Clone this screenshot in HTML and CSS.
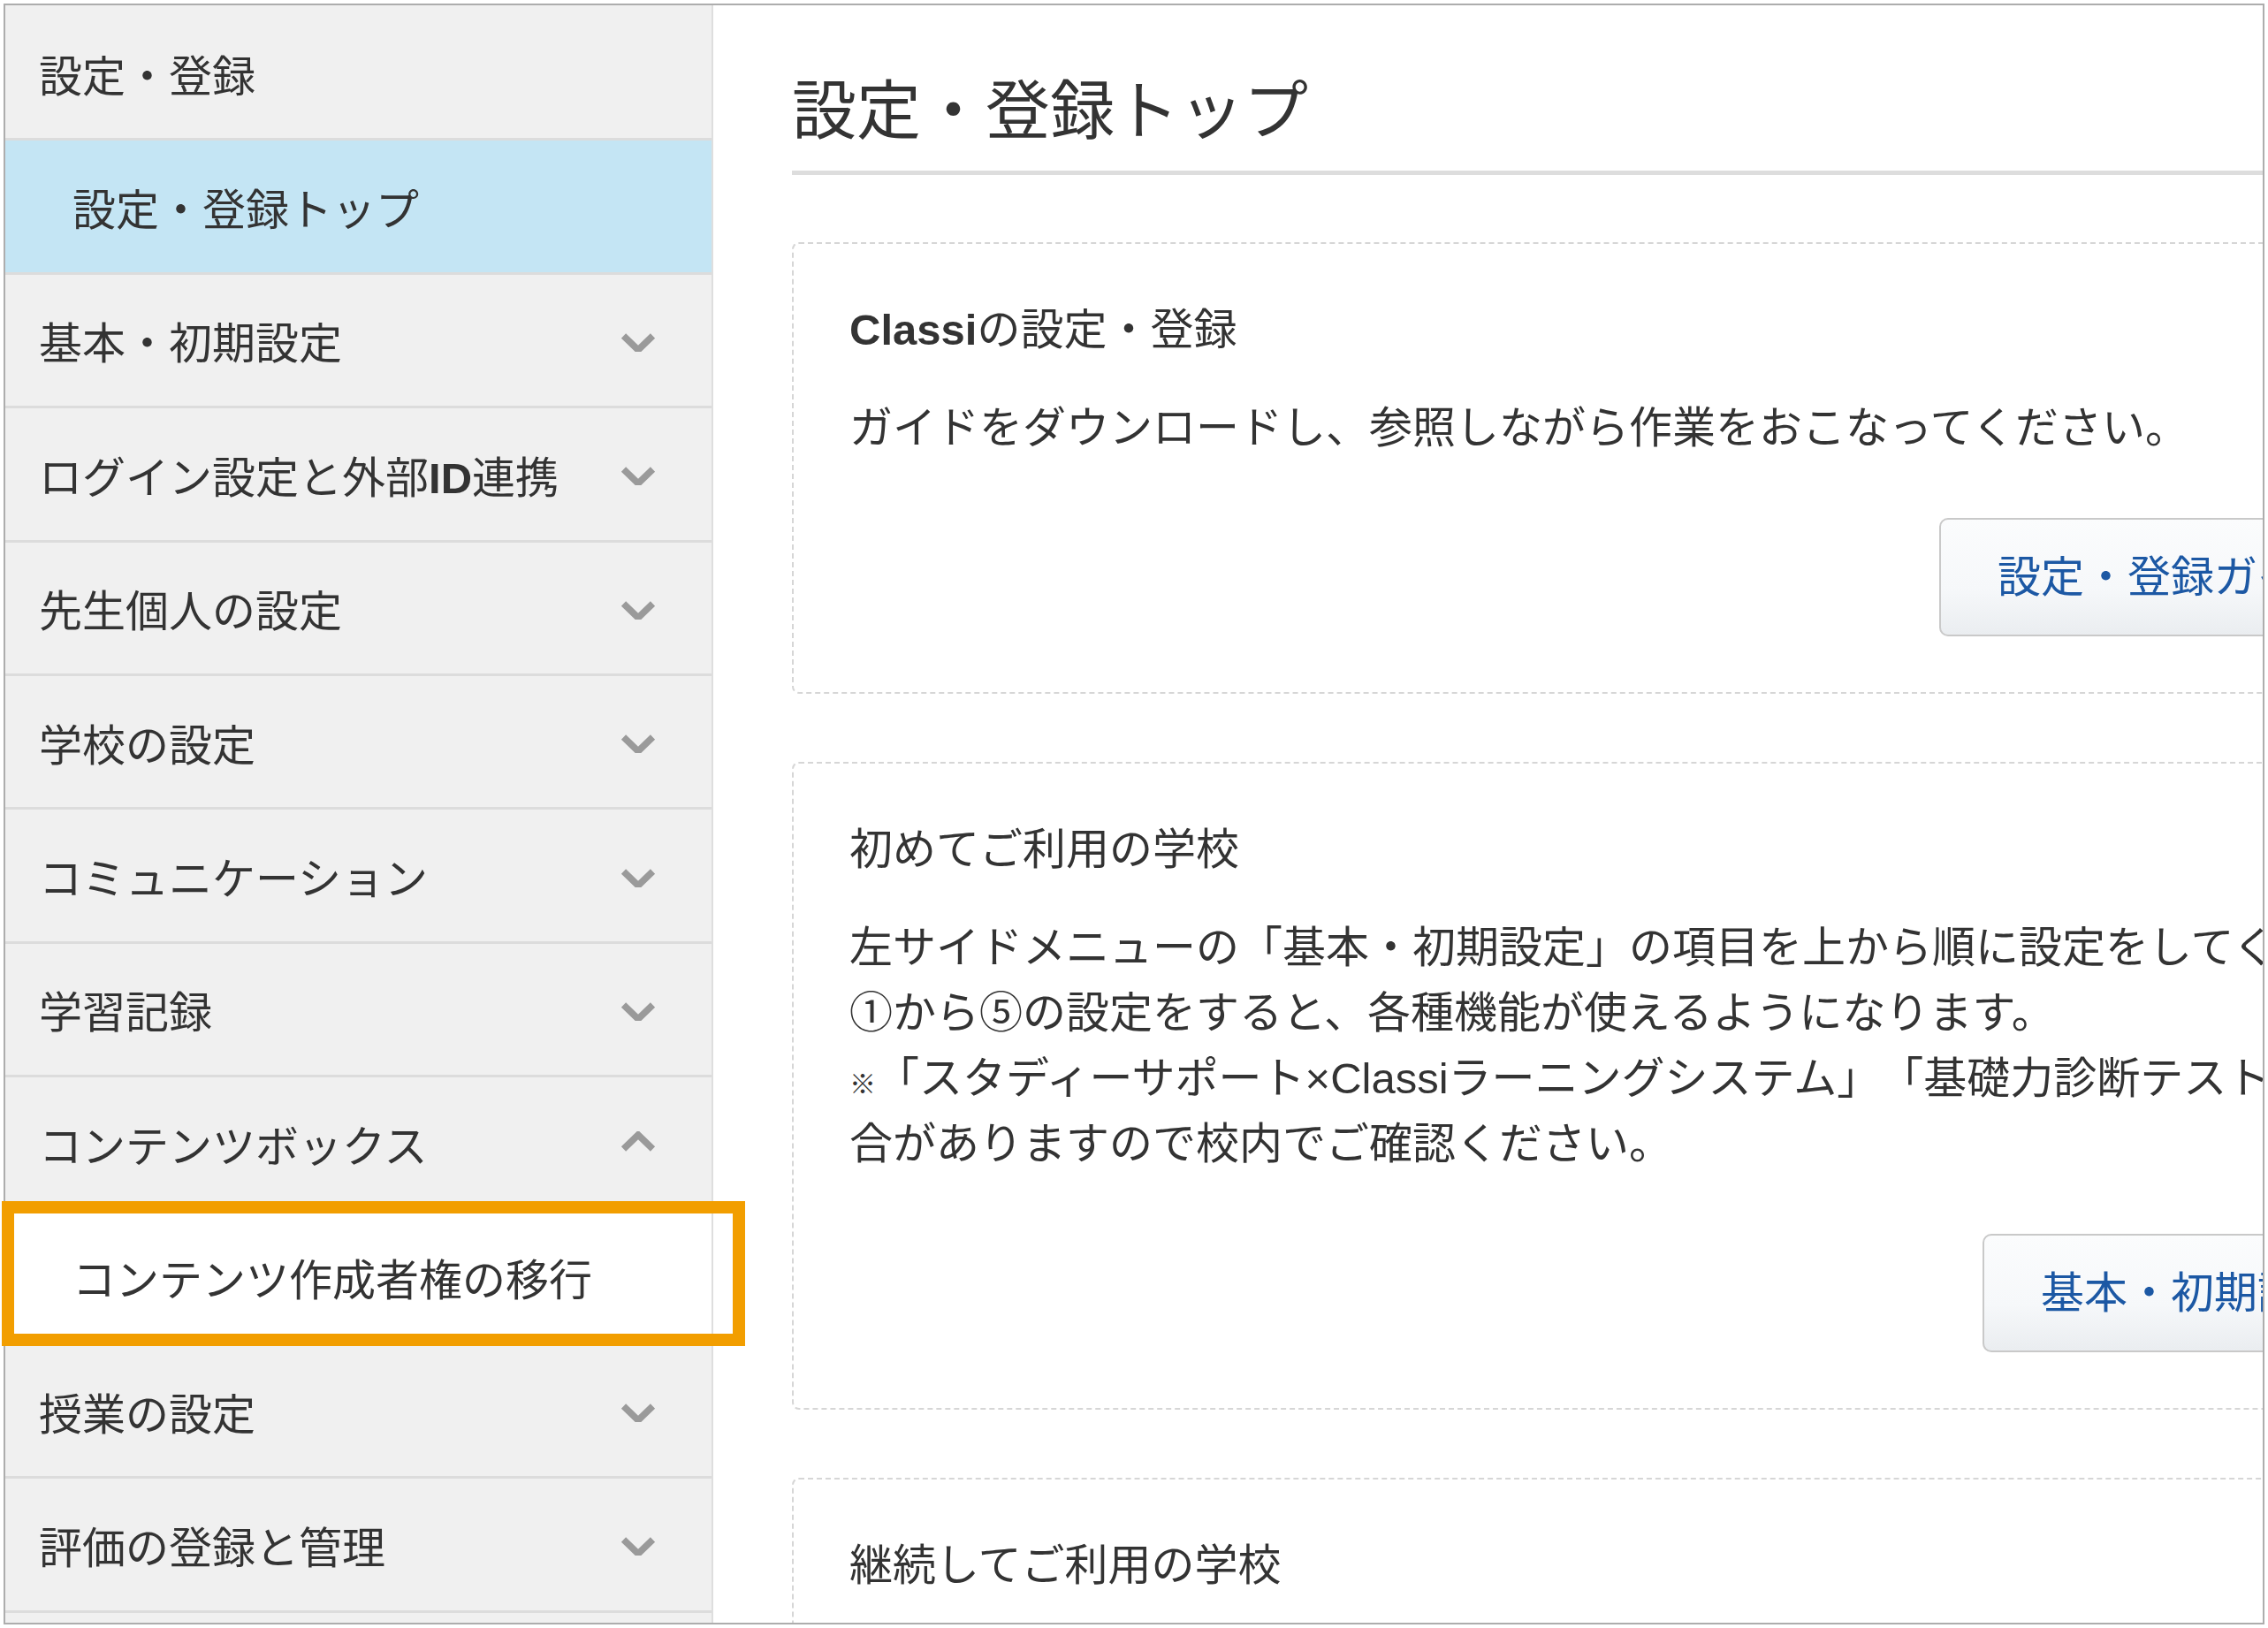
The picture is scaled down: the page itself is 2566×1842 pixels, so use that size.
FILE: index.html
```html
<!DOCTYPE html>
<html lang="ja">
<head>
    <meta charset="UTF-8">
    <meta name="viewport" content="width=device-width, initial-scale=1.0">
    <title>設定・登録トップ</title>
    <link rel="stylesheet" href="styles.css">
</head>
<body>
    <div class="frame">
        <nav class="side">
            <div class="side-head">設定・登録</div>
            <a class="side-sub is-active" href="#">設定・登録トップ</a>
            <div class="side-item">基本・初期設定
                <svg class="chev" viewBox="0 0 40 26"><polyline points="3.5,8 20,24 36.5,8"/></svg>
            </div>
            <div class="side-item">ログイン設定と外部<b class="latin">ID</b>連携
                <svg class="chev" viewBox="0 0 40 26"><polyline points="3.5,8 20,24 36.5,8"/></svg>
            </div>
            <div class="side-item">先生個人の設定
                <svg class="chev" viewBox="0 0 40 26"><polyline points="3.5,8 20,24 36.5,8"/></svg>
            </div>
            <div class="side-item">学校の設定
                <svg class="chev" viewBox="0 0 40 26"><polyline points="3.5,8 20,24 36.5,8"/></svg>
            </div>
            <div class="side-item">コミュニケーション
                <svg class="chev" viewBox="0 0 40 26"><polyline points="3.5,8 20,24 36.5,8"/></svg>
            </div>
            <div class="side-item">学習記録
                <svg class="chev" viewBox="0 0 40 26"><polyline points="3.5,8 20,24 36.5,8"/></svg>
            </div>
            <div class="side-item">コンテンツボックス
                <svg class="chev" viewBox="0 0 40 26"><polyline points="3.5,20 20,4 36.5,20"/></svg>
            </div>
            <a class="side-sub is-current" href="#">コンテンツ作成者権の移行<span class="mark"></span></a>
            <div class="side-item">授業の設定
                <svg class="chev" viewBox="0 0 40 26"><polyline points="3.5,8 20,24 36.5,8"/></svg>
            </div>
            <div class="side-item">評価の登録と管理
                <svg class="chev" viewBox="0 0 40 26"><polyline points="3.5,8 20,24 36.5,8"/></svg>
            </div>
        </nav>

        <main class="main">
            <div class="main-inner">
                <h1 class="page-title">設定・登録トップ</h1>

                <section class="card">
                    <h2 class="card-title"><b class="latin">Classi</b>の設定・登録</h2>
                    <p class="card-text">ガイドをダウンロードし、参照しながら作業をおこなってください。</p>
                    <div class="card-foot">
                        <a class="btn" href="#">設定・登録ガイド</a>
                    </div>
                </section>

                <section class="card">
                    <h2 class="card-title">初めてご利用の学校</h2>
                    <p class="card-text">左サイドメニューの「基本・初期設定」の項目を上から順に設定をしてください。<br>
                    ①から⑤の設定をすると、各種機能が使えるようになります。<br>
                    <span class="note-mark">※</span>「スタディーサポート×Classiラーニングシステム」「基礎力診断テスト」をご利用の場<br>
                    合がありますので校内でご確認ください。</p>
                    <div class="card-foot">
                        <a class="btn" href="#">基本・初期設定</a>
                    </div>
                </section>

                <section class="card">
                    <h2 class="card-title">継続してご利用の学校</h2>
                    <p class="card-text">年度更新の手順に沿って、クラス・生徒情報を更新してください。</p>
                </section>
            </div>
        </main>
    </div>
</body>
</html>
```

FILE: styles.css
```css
body {
    margin: 0;
    padding: 4px;
    background: #fff;
    color: #333;
    font-family: "Liberation Sans", "Noto Sans CJK JP", sans-serif;
    text-spacing-trim: space-all;
}
.frame {
    display: flex;
    height: 1834px;
    box-sizing: border-box;
    border: 2px solid #adadad;
}
.side {
    flex: 0 0 801px;
    box-sizing: border-box;
    padding-top: 2px;
    background: #f0f0f0;
    border-right: 2px solid #dedede;
}
.side-head,
.side-item,
.side-sub {
    display: flex;
    align-items: center;
    justify-content: space-between;
    height: 148.4px;
    border-bottom: 3px solid #dcdcdc;
    padding: 0 63px 0 38px;
    font-size: 49px;
    color: #333;
    text-decoration: none;
}
.side-sub {
    padding-left: 76px;
}
.side-sub.is-active {
    background: #c4e5f4;
}
.side-sub.is-current {
    position: relative;
    background: #fff;
}
.mark {
    position: absolute;
    top: -12px;
    left: -4px;
    right: -38px;
    bottom: -4px;
    border: 14px solid #f29e00;
}
.latin {
    font-weight: bold;
}
.side-item .latin {
    display: contents;
}
.chev {
    flex: 0 0 auto;
    width: 40px;
    height: 26px;
    fill: none;
    stroke: #9a9a9a;
    stroke-width: 7.5;
}
.main {
    flex: 1;
    overflow: hidden;
    padding: 66px 0 0 89px;
    background: #fff;
}
.main-inner {
    width: 1881px;
}
.page-title {
    margin: 0 0 76px;
    padding-bottom: 13px;
    border-bottom: 5px solid #dddddd;
    font-size: 73px;
    line-height: 108px;
    font-weight: normal;
    color: #333;
}
.card {
    border: 2px dashed #d6d6d6;
    border-radius: 8px;
    padding: 60px 57px 63px 63px;
    margin-bottom: 77px;
}
.card-title {
    margin: 0 0 37px;
    font-size: 49px;
    line-height: 74px;
    font-weight: normal;
}
.card-text {
    margin: 0;
    font-size: 49px;
    line-height: 74px;
    white-space: nowrap;
}
.note-mark {
    display: inline-block;
    width: 30px;
    font-size: 30px;
    line-height: 1;
    font-weight: bold;
}
.card-foot {
    display: flex;
    justify-content: flex-end;
    margin-top: 65px;
}
.btn {
    display: block;
    padding: 28px 64px;
    font-size: 49px;
    line-height: 74px;
    color: #1c58a4;
    text-decoration: none;
    white-space: nowrap;
    border: 2px solid #c9c9c9;
    border-radius: 10px;
    background: linear-gradient(to bottom, #fbfcfd 0%, #f6f8fa 60%, #eaedf0 100%);
}
```
